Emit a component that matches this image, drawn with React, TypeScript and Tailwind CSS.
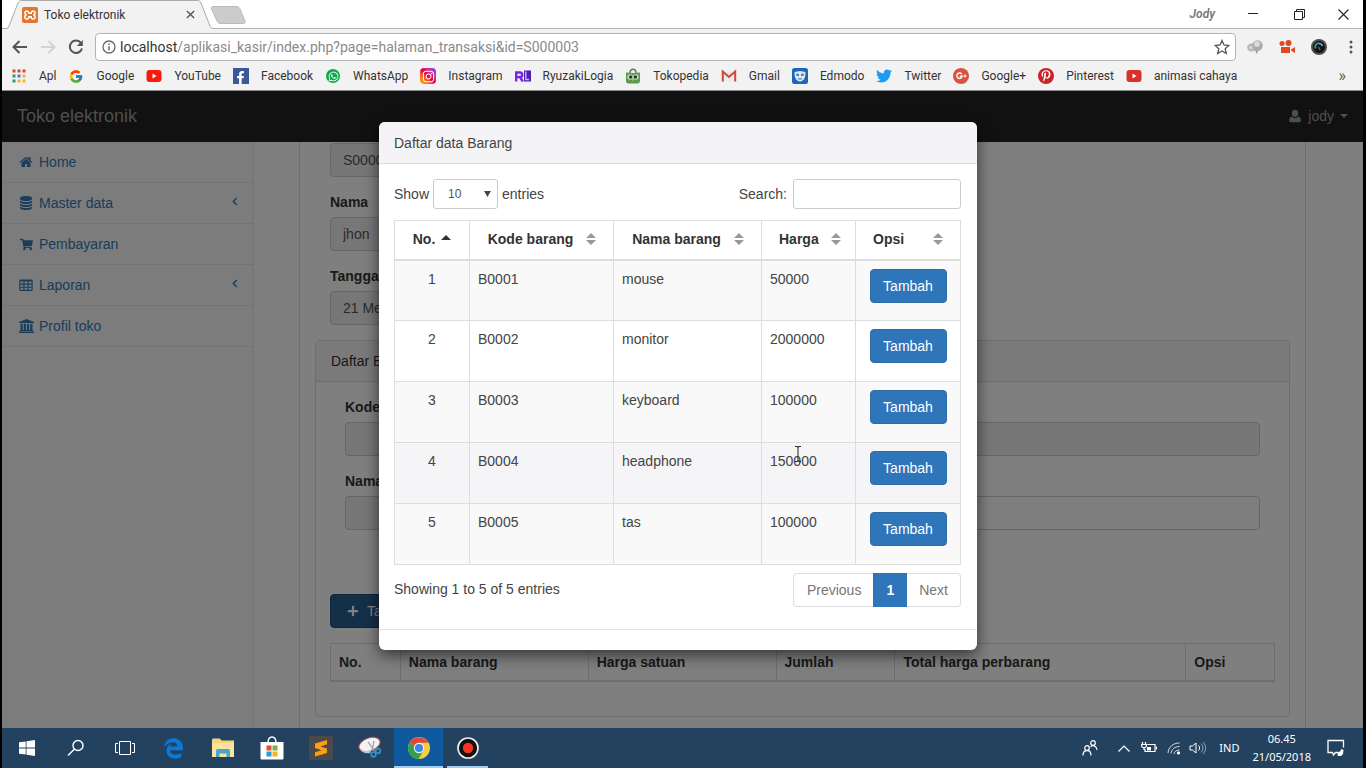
import React from "react";
import { FcGoogle } from "react-icons/fc";
import { FaWhatsapp, FaTwitter, FaPinterestP, FaFacebookF, FaShoppingCart, FaEdgeLegacy, FaInstagram, FaPlus } from "react-icons/fa";

type IconProps = { className?: string };

const HomeIcon = ({ className }: IconProps) => (
  <svg viewBox="0 0 1792 1792" className={className} fill="currentColor" aria-hidden="true">
    <path d="M1472 992v480q0 26-19 45t-45 19h-384v-384h-256v384h-384q-26 0-45-19t-19-45v-480q0-1 .5-3t.5-3l575-474 575 474q1 2 1 6zm223-69l-62 74q-8 9-21 11h-3q-13 0-21-7l-692-577-692 577q-12 8-24 7-13-2-21-11l-62-74q-8-10-7-23.5t11-21.5l719-599q32-26 76-26t76 26l244 204v-195q0-14 9-23t23-9h192q14 0 23 9t9 23v408l219 182q10 8 11 21.5t-7 23.5z" />
  </svg>
);

const DatabaseIcon = ({ className }: IconProps) => (
  <svg viewBox="0 0 1792 1792" className={className} fill="currentColor" aria-hidden="true">
    <path d="M896 768q237 0 443-43t325-127v170q0 69-103 128t-280 93.5-385 34.5-385-34.5-280-93.5-103-128v-170q119 84 325 127t443 43zm0 768q237 0 443-43t325-127v170q0 69-103 128t-280 93.5-385 34.5-385-34.5-280-93.5-103-128v-170q119 84 325 127t443 43zm0-384q237 0 443-43t325-127v170q0 69-103 128t-280 93.5-385 34.5-385-34.5-280-93.5-103-128v-170q119 84 325 127t443 43zm0-1152q208 0 385 34.5t280 93.5 103 128v128q0 69-103 128t-280 93.5-385 34.5-385-34.5-280-93.5-103-128v-128q0-69 103-128t280-93.5 385-34.5z" />
  </svg>
);

const TableIcon = ({ className }: IconProps) => (
  <svg viewBox="0 0 14 14" className={className} aria-hidden="true">
    <path fill="currentColor" fillRule="evenodd" d="M1.5 1.5h11a1.2 1.2 0 0 1 1.2 1.2v9a1.2 1.2 0 0 1-1.2 1.2h-11A1.2 1.2 0 0 1 .3 11.7v-9a1.2 1.2 0 0 1 1.2-1.2zM1.4 3.600v2h3v-2zm4.100 0v2h3v-2zm4.100 0v2h3v-2zM1.400 6.700v2h3v-2zm4.100 0v2h3v-2zm4.100 0v2h3v-2zM1.400 9.800v2h3v-2zm4.100 0v2h3v-2zm4.100 0v2h3v-2z" />
  </svg>
);

const BankIcon = ({ className }: IconProps) => (
  <svg viewBox="0 0 15 14" className={className} fill="currentColor" aria-hidden="true">
    <path d="M7.500 0L15 3v1H0V3zM1.500 4.700h2.200v6.300H1.500zM4.800 4.700H7v6.300H4.800zM8 4.700h2.200v6.300H8zM11.300 4.700h2.200v6.300h-2.200zM1 11h13v1H1zM0 12.500h15V14H0z" />
  </svg>
);

const UserIcon = ({ className }: IconProps) => (
  <svg viewBox="0 0 14 14" className={className} fill="currentColor" aria-hidden="true">
    <path d="M7 .8c1.900 0 3.200 1.400 3.200 3.400C10.200 6.300 8.800 8 7 8S3.800 6.300 3.800 4.200C3.800 2.200 5.100.8 7 .8zM4 7.400C4.800 8.400 5.800 9 7 9s2.200-.600 3-1.600c1.900.300 2.900 1.800 2.900 4.200 0 1-.700 1.600-1.700 1.600H2.800c-1 0-1.700-.600-1.700-1.600 0-2.400 1-3.900 2.900-4.200z" />
  </svg>
);

const XamppIcon = () => (
  <svg viewBox="0 0 16 16" className="size-4 shrink-0" aria-hidden="true">
    <rect width="16" height="16" rx="2" fill="#e2762f" />
    <path d="M5.500 4.200c-3.300-.8-3.300 3.300-.8 3.500-2.700.5-2.600 5 .800 4.200 1.200-.3 1.400-1.300 1.400-2.200h2.200c0 .9.200 1.900 1.400 2.200 3.400.8 3.500-3.700.8-4.200 2.500-.2 2.500-4.300-.8-3.500-1.200.3-1.400 1.100-1.400 2H6.900c0-.9-.2-1.700-1.400-2z" fill="none" stroke="#fff" strokeWidth="1.500" />
  </svg>
);

const AppsIcon = () => (
  <svg viewBox="0 0 16 16" className="size-4 shrink-0" aria-hidden="true">
    <path d="M1.500 1.500h3v3h-3zM6.500 1.500h3v3h-3zM11.500 1.500h3v3h-3z" fill="#d9473a" />
    <path d="M1.500 6.500h3v3h-3z" fill="#2f9e57" /><path d="M6.500 6.500h3v3h-3z" fill="#3b7ddd" /><path d="M11.500 6.500h3v3h-3z" fill="#f3b32b" />
    <path d="M1.500 11.500h3v3h-3z" fill="#2f9e57" /><path d="M6.500 11.500h3v3h-3zM11.500 11.500h3v3h-3z" fill="#f3b32b" />
  </svg>
);

const YouTubeIcon = ({ className }: IconProps) => (
  <svg viewBox="0 0 16 16" className={className} aria-hidden="true">
    <rect x=".5" y="2" width="15" height="12" rx="3" fill="currentColor" />
    <path d="M6.500 5.500v5l4-2.500z" fill="#fff" />
  </svg>
);

const FacebookIcon = () => (
  <span className="flex size-4 shrink-0 items-end justify-end bg-[#3b5998] pr-0.5 text-white"><FaFacebookF size={13} /></span>
);

const WhatsAppIcon = () => (
  <span className="flex size-4 shrink-0 items-center justify-center"><span className="flex size-[14px] items-center justify-center rounded-full bg-[#12a84a] text-white"><FaWhatsapp size={11} /></span></span>
);

const InstagramIcon = () => (
  <span className="flex size-4 shrink-0 items-center justify-center rounded bg-linear-to-tr from-amber-400 via-rose-600 to-purple-600 text-white"><FaInstagram size={13} /></span>
);

const RyuzakiIcon = () => (
  <svg viewBox="0 0 16 16" className="size-4 shrink-0" aria-hidden="true">
    <path d="M9 2.500h7v11H9z" fill="#4c1fb8" />
    <path d="M1.200 13.500v-9h3.600a2.300 2.300 0 0 1 .8 4.500H2.500M5 9l2.800 4.500" fill="none" stroke="#7a26e0" strokeWidth="2.400" />
    <path d="M10.800 3.500v8H14" fill="none" stroke="#c9b3ff" strokeWidth="1.400" />
  </svg>
);

const TokopediaIcon = () => (
  <svg viewBox="0 0 16 16" className="size-4 shrink-0" aria-hidden="true">
    <path d="M5 5c0-5 6-5 6 0" fill="none" stroke="#557d50" strokeWidth="1.500" />
    <path d="M1 4.500c4 .5 10 .5 14 0V13c0 1.500-1 2.500-2.500 2.500h-9C2 15.500 1 14.500 1 13z" fill="#5b9a55" />
    <circle cx="5.200" cy="9" r="2.800" fill="#c9dcc6" /><circle cx="10.800" cy="9" r="2.800" fill="#c9dcc6" />
    <circle cx="5.600" cy="9" r="1.700" fill="#293a29" /><circle cx="10.400" cy="9" r="1.700" fill="#293a29" />
    <path d="M8 10l1.300 1.500L8 13l-1.300-1.500z" fill="#d8b13f" />
  </svg>
);

const GmailIcon = () => (
  <svg viewBox="0 0 16 16" className="size-4 shrink-0" aria-hidden="true">
    <path d="M1.500 3h13v10.500h-13z" fill="#ececec" />
    <path d="M1.800 13.500V3.500L8 9l6.200-5.500v10" fill="none" stroke="#d0473b" strokeWidth="2" />
  </svg>
);

const EdmodoIcon = () => (
  <svg viewBox="0 0 16 16" className="size-4 shrink-0" aria-hidden="true">
    <rect width="16" height="16" rx="2.500" fill="#1f66b8" />
    <path d="M2.500 4.500C4 3 6.500 3.500 8 3c1.500.5 4 0 5.500 1.500 0 5-1.500 8.500-5.500 9-4-.5-5.500-4-5.500-9z" fill="#dfeaf7" />
    <path d="M4 6c1-.6 2-.6 3 0v2H4.500zM9 6c1-.6 2-.6 3 0l-.5 2H9z" fill="#4a86cb" />
    <path d="M6 10.500c1.500.8 2.500.8 4 0" stroke="#1f66b8" fill="none" />
  </svg>
);

const GooglePlusIcon = () => (
  <svg viewBox="0 0 16 16" className="size-4 shrink-0" aria-hidden="true">
    <circle cx="8" cy="8" r="8" fill="#db5240" />
    <path d="M8.700 6.100A2.700 2.700 0 1 0 9.200 8.200H6.700" fill="none" stroke="#fff" strokeWidth="1.400" />
    <path d="M12 6.500v3M10.500 8h3" stroke="#fff" strokeWidth="1.200" />
  </svg>
);

const PinterestIcon = () => (
  <span className="flex size-4 shrink-0 items-center justify-center rounded-full bg-[#c8232c] text-white"><FaPinterestP size={12} /></span>
);

const bookmarks: { label: string; icon: React.ReactNode }[] = [
  { label: "Apl", icon: <AppsIcon /> },
  { label: "Google", icon: <FcGoogle size={15} className="w-4 shrink-0" /> },
  { label: "YouTube", icon: <YouTubeIcon className="size-4 shrink-0 text-[#f61c0d]" /> },
  { label: "Facebook", icon: <FacebookIcon /> },
  { label: "WhatsApp", icon: <WhatsAppIcon /> },
  { label: "Instagram", icon: <InstagramIcon /> },
  { label: "RyuzakiLogia", icon: <RyuzakiIcon /> },
  { label: "Tokopedia", icon: <TokopediaIcon /> },
  { label: "Gmail", icon: <GmailIcon /> },
  { label: "Edmodo", icon: <EdmodoIcon /> },
  { label: "Twitter", icon: <FaTwitter size={16} className="shrink-0 text-[#1d9bf0]" /> },
  { label: "Google+", icon: <GooglePlusIcon /> },
  { label: "Pinterest", icon: <PinterestIcon /> },
  { label: "animasi cahaya", icon: <YouTubeIcon className="size-4 shrink-0 text-[#d9302a]" /> },
];

function BrowserChrome() {
  return (
    <header className="shrink-0 border-b border-[#8a8a8a] bg-[#f2f2f2] font-['Roboto','Noto_Sans',sans-serif] text-xs text-[#333]">
      <div className="flex h-[29px] items-stretch border-b border-[#b5b5b5] bg-white">
        <div className="relative -mb-px flex w-[212px] items-center pr-3 pl-5">
          <svg viewBox="0 0 212 29" className="absolute inset-0 size-full" preserveAspectRatio="none" aria-hidden="true">
            <path d="M0 29V28.500H4c2 0 2.500-1 3-2.500L16 3c1-2 2-2.500 4-2.500h175c2 0 3 .500 4 2.500l9 23c.700 2 1.500 2.500 4 2.500V29z" fill="#f2f2f2" />
            <path d="M0 28.500H4c2 0 2.500-1 3-2.500L16 3c1-2 2-2.500 4-2.500h175c2 0 3 .500 4 2.500l9 23c.700 2 1.500 2.500 4 2.500" fill="none" stroke="#aaa" />
          </svg>
          <div className="relative flex flex-1 items-center gap-[6px]">
            <XamppIcon />
            <span className="flex-1">Toko elektronik</span>
            <button aria-label="Close tab" className="mr-1 flex size-4 items-center justify-center text-[#555]">
              <svg viewBox="0 0 10 10" className="size-[9px]"><path d="M1 1l8 8M9 1l-8 8" stroke="currentColor" strokeWidth="1.500" /></svg>
            </button>
          </div>
        </div>
        <button aria-label="New tab" className="-ml-1 flex items-center pt-0.5">
          <svg viewBox="0 0 36 18" className="h-[18px] w-9"><path d="M3 .5h23c2 0 3 .5 4 2.500l5 12c.5 1.500 0 2.500-1.500 2.500H11c-2 0-3-.5-4-2.500L1.500 3C1 1.500 1.500.500 3 .500z" fill="#ccc" stroke="#bbb" /></svg>
        </button>
        <div className="ml-auto flex items-center">
          <span className="mr-4 font-semibold text-[#777] italic">Jody</span>
          <button aria-label="Minimize" className="flex w-11 justify-center"><svg viewBox="0 0 10 10" className="size-[10px]"><path d="M0 4.500h10" stroke="#222" /></svg></button>
          <button aria-label="Restore" className="flex w-12 justify-center"><svg viewBox="0 0 11 11" className="size-[11px]"><path d="M.5 2.500h8v8h-8zM2.500 2.500v-2h8v8h-2" fill="none" stroke="#222" /></svg></button>
          <button aria-label="Close" className="flex w-10 justify-center"><svg viewBox="0 0 11 11" className="size-[11px]"><path d="M.5.5l10 10M10.500.5l-10 10" stroke="#222" strokeWidth="1.100" /></svg></button>
        </div>
      </div>
      <div className="flex h-9 items-center pr-1 pl-2">
        <div className="flex items-center gap-2 pr-[9px] text-[#555]">
          <button aria-label="Back"><svg viewBox="0 0 20 20" className="size-5"><path d="M17 10H4M9.500 4L3.500 10l6 6" fill="none" stroke="currentColor" strokeWidth="2" /></svg></button>
          <button aria-label="Forward" className="text-[#d2d2d2]"><svg viewBox="0 0 20 20" className="size-5"><path d="M3 10h13M10.500 4l6 6-6 6" fill="none" stroke="currentColor" strokeWidth="2" /></svg></button>
          <button aria-label="Reload"><svg viewBox="0 0 20 20" className="size-5"><path d="M15 6a6.200 6.200 0 1 0 1 5.500" fill="none" stroke="currentColor" strokeWidth="2" /><path d="M16.800 3v6h-6z" fill="currentColor" /></svg></button>
        </div>
        <div className="flex h-7 flex-1 items-center rounded-sm border border-[#b4b4b4] bg-white pr-[5px] pl-[6px]">
          <svg viewBox="0 0 14 14" className="size-[14px] shrink-0" aria-hidden="true"><circle cx="7" cy="7" r="6" fill="none" stroke="#666" strokeWidth="1.300" /><path d="M7 6.200v4M7 3.500v1.400" stroke="#666" strokeWidth="1.500" /></svg>
          <div className="flex-1 pl-1 text-sm text-[#8a8a8a]"><span className="text-[#333]">localhost</span>/aplikasi_kasir/index.php?page=halaman_transaksi&amp;id=S000003</div>
          <button aria-label="Bookmark this page"><svg viewBox="0 0 16 16" className="size-4"><path d="M8 1.500l2 4.500 4.800.500-3.600 3.200 1.100 4.800L8 12l-4.300 2.500 1.100-4.800L1.200 6.500 6 6z" fill="none" stroke="#555" strokeWidth="1.300" /></svg></button>
        </div>
        <div className="flex items-center gap-4 pl-[11px]">
          <svg viewBox="0 0 16 16" className="size-4" aria-hidden="true"><ellipse cx="4.500" cy="8.500" rx="4.300" ry="4" fill="#b5b5b5" /><ellipse cx="4" cy="8.500" rx="2" ry="1.500" fill="#d8d8d8" /><path d="M8 11l4-1-2.500 5z" fill="#999" /><circle cx="10.500" cy="6.500" r="5.200" fill="#a9a9a9" /><circle cx="10" cy="5" r="3" fill="#d9d9d9" /></svg>
          <svg viewBox="0 0 16 16" className="size-4" fill="#e2471d" aria-hidden="true"><circle cx="3" cy="4.500" r="2.500" /><circle cx="9.500" cy="4" r="3" /><path d="M2 8h9v6H2zM12 10.500L16 8v6l-4-2.500z" /></svg>
          <svg viewBox="0 0 16 16" className="size-4" aria-hidden="true"><circle cx="8" cy="8" r="8" fill="#4b4e52" /><circle cx="8" cy="8" r="6" fill="#141414" /><path d="M4.600 9.500A3.800 3.800 0 0 1 6.500 4.500" fill="none" stroke="#35b36b" strokeWidth="1.800" /><path d="M6.500 4.500a4 4 0 0 1 5 2.500" fill="none" stroke="#3fb3e8" strokeWidth="1.800" /><path d="M7.500 8l1.500 3" stroke="#c7417b" strokeWidth="1.300" /></svg>
          <button aria-label="Menu" className="flex w-4 justify-center"><svg viewBox="0 0 4 14" className="h-[14px] w-1" fill="#555"><circle cx="2" cy="2" r="1.500" /><circle cx="2" cy="7" r="1.500" /><circle cx="2" cy="12" r="1.500" /></svg></button>
        </div>
      </div>
      <nav aria-label="Bookmarks" className="flex h-[25px] items-center gap-3 pr-[17px] pb-[3px] pl-[9px]">
        {bookmarks.map((b) => (
          <a key={b.label} href="#" className="flex shrink-0 items-center gap-3">
            {b.icon}
            {b.label}
          </a>
        ))}
        <button aria-label="More bookmarks" className="ml-auto text-base leading-4 text-[#555]">»</button>
      </nav>
    </header>
  );
}

const menu: { label: string; icon: React.ReactNode; sub?: boolean }[] = [
  { label: "Home", icon: <HomeIcon className="size-[14px]" /> },
  { label: "Master data", icon: <DatabaseIcon className="h-[14px] w-[14px]" />, sub: true },
  { label: "Pembayaran", icon: <FaShoppingCart size={13} /> },
  { label: "Laporan", icon: <TableIcon className="size-[14px]" />, sub: true },
  { label: "Profil toko", icon: <BankIcon className="h-[14px] w-[15px]" /> },
];

function Field({ id, label, value, readOnly = true }: { id: string; label: string; value?: string; readOnly?: boolean }) {
  return (
    <div className="mb-[15px]">
      <label htmlFor={id} className="mb-[5px] block leading-5 font-bold">{label}</label>
      <input id={id} defaultValue={value} readOnly={readOnly} className="block h-[34px] w-full rounded border border-[#ccc] bg-[#eee] px-3 text-[#555]" />
    </div>
  );
}

function AppPage() {
  const th = "border border-[#ddd] border-b-2 p-2 text-left leading-5 font-bold";
  return (
    <div className="flex h-full flex-col overflow-hidden bg-white">
      <div className="flex h-[51px] shrink-0 items-center justify-between bg-[#222] px-[15px] pb-px text-[#9d9d9d]">
        <a href="#" className="text-lg">Toko elektronik</a>
        <button className="flex items-center gap-[6px]">
          <UserIcon className="size-[14px]" />
          jody
          <span className="border-x-4 border-t-4 border-x-transparent border-t-current" />
        </button>
      </div>
      <div className="flex min-h-0 flex-1">
        <nav className="w-[252px] shrink-0 border-r border-[#e7e7e7] bg-[#f8f8f8]">
          {menu.map((m) => (
            <a key={m.label} href="#" className="flex h-[41px] items-center gap-1 border-b border-[#e7e7e7] px-[15px] text-[#337ab7]">
              <span className="flex w-[18px] justify-center">{m.icon}</span>
              <span className="flex-1">{m.label}</span>
              {m.sub && <svg viewBox="0 0 6 10" className="mb-1 h-[9px] w-[6px]" aria-hidden="true"><path d="M5 1L1 5l4 4" fill="none" stroke="currentColor" strokeWidth="1.500" /></svg>}
            </a>
          ))}
        </nav>
        <main className="min-w-0 flex-1 pr-[57px] pl-[45px]">
          <div className="h-full border-x border-[#ddd] px-[15px] pt-px">
            <div className="w-1/2 px-[15px]">
              <input aria-label="Kode transaksi" defaultValue="S000003" readOnly className="mb-[15px] block h-[34px] w-full rounded border border-[#ccc] bg-[#eee] px-3 text-[#555]" />
              <Field id="nama" label="Nama" value="jhon" />
              <Field id="tanggal" label="Tanggal" value="21 Mei 2018" />
            </div>
            <section className="rounded border border-[#ddd]">
              <h2 className="border-b border-[#ddd] bg-[#f5f5f5] px-[15px] py-[10px] leading-5">Daftar Barang</h2>
              <div className="p-[14px] pt-[15px]">
                <div className="mb-[49px] grid grid-cols-2 gap-x-[30px] px-[15px]">
                  <Field id="kode-barang" label="Kode" />
                  <input aria-label="Harga" readOnly className="mb-[15px] h-[34px] self-end rounded border border-[#ccc] bg-[#eee] px-3" />
                  <Field id="nama-barang" label="Nama" />
                  <input aria-label="Jumlah" className="mb-[15px] h-[34px] self-end rounded border border-[#ccc] bg-white px-3" />
                </div>
                <button className="mb-[15px] flex h-[34px] items-center gap-2 rounded border border-[#204d74] bg-[#286090] px-4 text-white"><FaPlus size={12} />Tambah</button>
                <table className="mb-5 w-full table-fixed border-collapse">
                  <thead>
                    <tr>
                      <th className={th + " w-[7.4%]"}>No.</th>
                      <th className={th + " w-[19.9%]"}>Nama barang</th>
                      <th className={th + " w-[19.9%]"}>Harga satuan</th>
                      <th className={th + " w-[12.6%]"}>Jumlah</th>
                      <th className={th}>Total harga perbarang</th>
                      <th className={th + " w-[9.4%]"}>Opsi</th>
                    </tr>
                  </thead>
                </table>
              </div>
            </section>
          </div>
        </main>
      </div>
    </div>
  );
}

const items = [
  { code: "B0001", name: "mouse", price: 50000 },
  { code: "B0002", name: "monitor", price: 2000000 },
  { code: "B0003", name: "keyboard", price: 100000 },
  { code: "B0004", name: "headphone", price: 150000 },
  { code: "B0005", name: "tas", price: 100000 },
];

const rowColors = ["bg-[#f9f9f9]", "bg-white", "bg-[#f9f9f9]", "bg-[#f5f5f7]", "bg-[#f9f9f9]"];

function SortHeader({ label, width, sorted, left }: { label: string; width: string; sorted?: boolean; left?: boolean }) {
  return (
    <th className={"border border-[#ddd] border-b-2 p-0 " + width}>
      <button className={"flex h-9 w-full items-center font-bold " + (sorted ? "justify-center gap-[6px]" : "pr-[17px] pl-[17px]")}>
        <span className={sorted ? "" : left ? "flex-1 text-left" : "flex-1 pr-3 text-center"}>{label}</span>
        {sorted ? (
          <svg viewBox="0 0 10 5" className="mb-1 h-[5px] w-[10px] shrink-0" aria-hidden="true"><path d="M0 5L5 0l5 5z" fill="#333" /></svg>
        ) : (
          <svg viewBox="0 0 10 12" className="h-3 w-[10px] shrink-0" aria-hidden="true"><path d="M0 5l5-5 5 5zM0 7l5 5 5-5z" fill="#999" /></svg>
        )}
      </button>
    </th>
  );
}

function ItemModal() {
  return (
    <div role="dialog" aria-labelledby="modal-title" className="w-[598px] max-w-full self-start overflow-hidden rounded-md bg-white text-[#444] shadow-[0_5px_15px_rgba(0,0,0,0.6)]">
      <h1 id="modal-title" className="border-b border-[#ddd] bg-[#f4f4f6] px-[15px] pt-[11px] pb-[10px] leading-5">Daftar data Barang</h1>
      <div className="pt-[15px] pr-4 pl-[15px]">
        <div className="mb-[11px] flex items-center justify-between">
          <div className="flex items-center gap-1">
            <label htmlFor="length">Show</label>
            <span className="relative flex items-center">
              <select id="length" className="h-[30px] w-[65px] appearance-none rounded-[3px] border border-[#ccc] bg-white pl-[14px] text-xs text-[#555]">
                <option>10</option>
                <option>25</option>
              </select>
              <svg viewBox="0 0 8 7" className="pointer-events-none absolute right-[7px] h-[6px] w-[7px]" aria-hidden="true"><path d="M0 0h8L4 7z" fill="#444" /></svg>
            </span>
            <span>entries</span>
          </div>
          <div className="flex items-center gap-[6px]">
            <label htmlFor="search">Search:</label>
            <input id="search" type="search" className="h-[30px] w-[168px] rounded-[3px] border border-[#ccc] px-2 text-xs" />
          </div>
        </div>
        <table className="w-full table-fixed border-collapse">
          <thead className="text-[#333]">
            <tr className="h-[39px] align-top">
              <SortHeader label="No." width="w-[75px]" sorted />
              <SortHeader label="Kode barang" width="w-[144px]" />
              <SortHeader label="Nama barang" width="w-[148px]" />
              <SortHeader label="Harga" width="w-[94px]" />
              <SortHeader label="Opsi" width="" left />
            </tr>
          </thead>
          <tbody>
            {items.map((it, i) => (
              <tr key={it.code} className={"h-[61px] align-top leading-5 " + rowColors[i]}>
                <td className="border border-[#ddd] p-2 text-center">{i + 1}</td>
                <td className="border border-[#ddd] p-2">{it.code}</td>
                <td className="border border-[#ddd] p-2">{it.name}</td>
                <td className="border border-[#ddd] p-2">{it.price}</td>
                <td className="border border-[#ddd] p-2 text-center">
                  <button className="h-[34px] w-[77px] rounded border border-[#2e6da4] bg-[#2e75b9] text-white">Tambah</button>
                </td>
              </tr>
            ))}
          </tbody>
        </table>
        <div className="flex justify-between pt-2 pb-[22px]">
          <p className="pt-[6px] leading-5">Showing 1 to 5 of 5 entries</p>
          <nav aria-label="Pagination" className="flex h-[34px] text-[#777]">
            <a href="#" className="flex items-center rounded-l border border-r-0 border-[#ddd] pr-3 pl-[13px]">Previous</a>
            <a href="#" aria-current="page" className="flex items-center bg-[#2e75b9] px-[13px] font-bold text-white">1</a>
            <a href="#" className="flex items-center rounded-r border border-l-0 border-[#ddd] px-3">Next</a>
          </nav>
        </div>
      </div>
      <div className="h-[21px] border-t border-[#e5e5e5]" />
    </div>
  );
}

const taskIcons: { label: string; icon: React.ReactNode }[] = [
  { label: "Start", icon: <svg viewBox="0 0 16 16" className="size-4" fill="#fff"><path d="M0 2.300l6.700-.9v6.200H0zM7.500 1.300L16 0v7.600H7.500zM0 8.400h6.700v6.200L0 13.700zM7.500 8.400H16V16l-8.500-1.300z" /></svg> },
  { label: "Search", icon: <svg viewBox="0 0 18 18" className="size-[18px]" fill="none" stroke="#fff" strokeWidth="1.400"><circle cx="11" cy="6.500" r="5" /><path d="M7.500 10L1 16.500" /></svg> },
  { label: "Task view", icon: <svg viewBox="0 0 20 16" className="h-4 w-5" fill="none" stroke="#fff"><path d="M4.500 1.500h11v13h-11zM3 3.500H.5v9H3M17 3.500h2.500v9H17" /></svg> },
  { label: "Edge", icon: <FaEdgeLegacy size={21} color="#0a78d7" /> },
  { label: "File Explorer", icon: <svg viewBox="0 0 22 20" className="h-5 w-[22px]"><path d="M0 2c0-1 .5-1.500 1.500-1.500H8l1.500 2H22V19H0z" fill="#f5d67b" /><path d="M0 5h22v14H0z" fill="#fbe39c" /><path d="M4 19v-6c0-1.500 1-2 2-2h10c1 0 2 .5 2 2v6h-3.500v-3.500h-7V19z" fill="#45a5d3" /></svg> },
  { label: "Store", icon: <svg viewBox="0 0 24 24" className="size-6"><path d="M8 7c0-8 8-8 8 0" fill="none" stroke="#fff" strokeWidth="1.500" /><path d="M.5 6h23v16.500q0 1-1 1h-21q-1 0-1-1z" fill="#fff" /><path d="M6.500 9.500h5v5h-5z" fill="#e5502b" /><path d="M12.500 9.500h5v5h-5z" fill="#7cb342" /><path d="M6.500 15.500h5v5h-5z" fill="#1f9fe0" /><path d="M12.500 15.500h5v5h-5z" fill="#f6b51e" /></svg> },
  { label: "Sublime Text", icon: <svg viewBox="0 0 24 24" className="size-6"><rect width="24" height="24" rx="1" fill="#4c4a48" /><path d="M18 4v4.300L11.500 10.500 18 12.500V17L6 20.500v-4.300l6.500-2L6 12V7.500z" fill="#ff9d14" /></svg> },
  { label: "Snipping Tool", icon: <svg viewBox="0 0 24 24" className="size-6"><ellipse cx="11.500" cy="8.500" rx="11" ry="6.500" transform="rotate(-20 11.500 8.500)" fill="#f2f2f2" stroke="#b94c51" /><path d="M2 13c4 3 9 2 12 0l-2 4c-4 1-8 0-10-4z" fill="#c3c3c8" /><path d="M10 6l8 11M16 5l-2 10" stroke="#909ba5" strokeWidth="1.200" /><circle cx="15.500" cy="18.500" r="2.300" fill="none" stroke="#358ed0" strokeWidth="1.700" /><circle cx="20" cy="15" r="2.300" fill="none" stroke="#358ed0" strokeWidth="1.700" /></svg> },
  { label: "Chrome", icon: <svg viewBox="0 0 22 22" className="size-[22px]"><circle cx="11" cy="11" r="11" fill="#f9cd3c" /><path d="M11 11L1.500 5.500A11 11 0 0 0 10.500 22L15.500 13.500z" fill="#2da250" /><path d="M11 11L1.500 5.500A11 11 0 0 1 20.500 5.800H11z" fill="#dc4a3c" /><circle cx="11" cy="11" r="5.200" fill="#f4f4f4" /><circle cx="11" cy="11" r="4.100" fill="#4285e8" /></svg> },
  { label: "Recorder", icon: <svg viewBox="0 0 22 22" className="size-[22px]"><circle cx="11" cy="11" r="10" fill="#111" stroke="#eee" strokeWidth="1.700" /><circle cx="11" cy="11" r="5.200" fill="#f8331f" /></svg> },
];

function Taskbar() {
  return (
    <footer className="flex h-10 shrink-0 items-stretch justify-between bg-[#23425f] font-['Noto_Sans','Open_Sans',sans-serif] text-[11px] text-white">
      <div className="flex">
        {taskIcons.map((t) => (
          <button
            key={t.label}
            aria-label={t.label}
            className={
              "relative flex w-[49px] items-center justify-center " + (t.label === "Chrome" ? "bg-[#0f5a9f]" : "")
            }
          >
            {t.icon}
            {t.label === "Chrome" && <span className="absolute inset-x-0 bottom-0 h-0.5 bg-[#a3cdf2]" />}
            {t.label === "Recorder" && <span className="absolute inset-x-1 bottom-0 h-0.5 bg-[#a3cdf2]" />}
          </button>
        ))}
      </div>
      <div className="flex items-center pr-[18px]">
        <svg viewBox="0 0 16 16" className="mr-5 size-4" fill="none" stroke="#fff" strokeWidth="1.200" aria-hidden="true"><circle cx="5" cy="8" r="2.300" /><path d="M1 15.500c0-6.500 8-6.500 8 0" /><circle cx="11" cy="3" r="2.300" /><path d="M8.500 7c2-2.500 6-1.500 6.500 3" /></svg>
        <svg viewBox="0 0 12 7" className="mr-[11px] h-[7px] w-3" fill="none" stroke="#fff" strokeWidth="1.200" aria-hidden="true"><path d="M.5 6.500L6 1l5.500 5.500" /></svg>
        <svg viewBox="0 0 16 12" className="mr-[10px] h-3 w-4" fill="none" stroke="#fff" strokeWidth="1.200" aria-hidden="true"><path d="M6.500 2.500h7.500v7H4V7M15.500 4.500v3M1.500 0v2M4.500 0v2M.5 2.500h5c0 3-1 3-2.500 3s-2.500 0-2.500-3zM3 5.500V8" /><path d="M6 5h4v3.500H6z" fill="#fff" stroke="none" /></svg>
        <svg viewBox="0 0 14 14" className="mr-2 size-[14px]" fill="none" stroke="#fff" aria-hidden="true"><path d="M1 12C1.500 6 6 2 12.500 2M4 12.500C4.500 8.500 7.500 5.500 12.500 5.500M7 13c.5-2.500 2.500-4 5.500-4" opacity=".8" /><circle cx="11.500" cy="12" r="1.200" fill="#fff" /></svg>
        <svg viewBox="0 0 18 14" className="mr-3 h-[14px] w-[18px]" fill="none" stroke="#fff" aria-hidden="true"><path d="M1 5h2.500L7 2v10L3.500 9H1zM9.500 4.500c1.500 1.500 1.500 3.500 0 5" /><path d="M12 2.500c2.500 3 2.500 6 0 9M14 1c3.500 4 3.500 8 0 12" opacity=".5" /></svg>
        <span className="mr-[13px]">IND</span>
        <div className="mr-4 text-center leading-[18px]">
          <div>06.45</div>
          <div>21/05/2018</div>
        </div>
        <svg viewBox="0 0 18 18" className="size-[18px]" fill="none" stroke="#fff" strokeWidth="1.300" aria-hidden="true"><path d="M11 13.500H8.500L6.500 16l-1-2.500H1V1.500h15.500v7" /><path d="M10.500 15.500c0-2 1-3 2.500-3l1.500-2.500 2 1-.5 4-2 2h-3z" fill="#fff" stroke="none" /></svg>
      </div>
    </footer>
  );
}

export default function App() {
  return (
    <div className="flex h-screen flex-col overflow-hidden bg-black pr-[3px] pl-0.5">
      <BrowserChrome />
      <div className="relative min-h-0 flex-1 font-['Liberation_Sans',Arial,sans-serif] text-sm text-[#333]">
        <AppPage />
        <div className="absolute inset-0 flex justify-center bg-black/50 pt-[31px] pr-[9px]">
          <ItemModal />
        </div>
        <svg viewBox="0 0 8 16" className="pointer-events-none absolute top-[355px] left-[792px] h-4 w-2" fill="none" stroke="#222" aria-hidden="true">
          <path d="M1 .5h2.500l.5 1 .5-1H7M4 1v14M1 15.500h2.500l.5-1 .5 1H7" />
        </svg>
      </div>
      <Taskbar />
    </div>
  );
}
